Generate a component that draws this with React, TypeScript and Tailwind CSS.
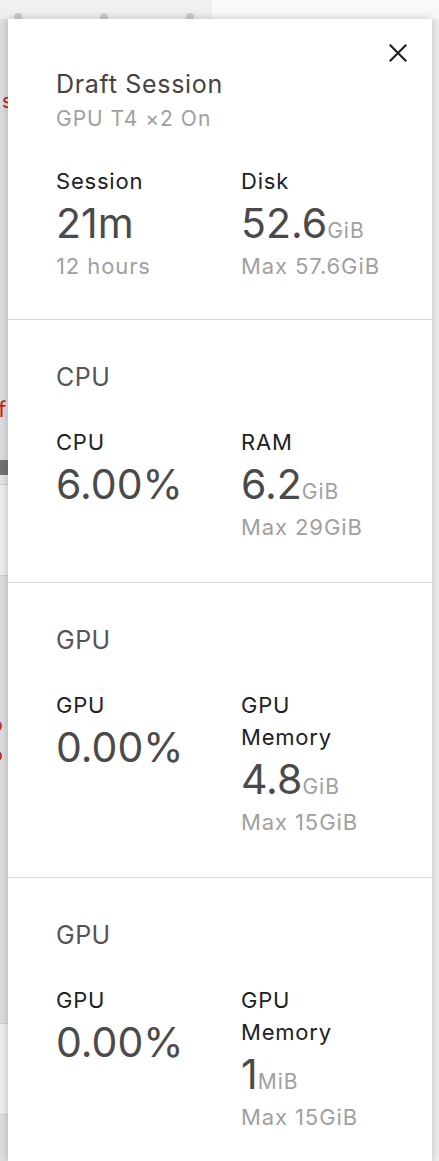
import React from "react";

type StatProps = { label: string; value: string; unit?: string; sub?: string };

function Stat({ label, value, unit, sub }: StatProps) {
  return (
    <div className="flex flex-col">
      <div className="text-[22px] leading-[32px] tracking-[0.8px] text-[#202124]">{label}</div>
      <div className="whitespace-nowrap text-[41px] leading-[53px] text-[#4a4a4a]">
        {value}
        {unit && <span className="text-[21px] leading-none tracking-[1px] text-[#a0a0a0]">{unit}</span>}
      </div>
      {sub && <div className="whitespace-nowrap text-[22px] leading-[32px] tracking-[0.9px] text-[#a0a0a0]">{sub}</div>}
    </div>
  );
}

function Section({ title, children, last }: { title: string; children: React.ReactNode; last?: boolean }) {
  return (
    <div className={last ? "px-[48px] pt-[41px] pb-[28px]" : "border-b border-[#dcdcdc] px-[48px] pt-[41px] pb-[39px]"}>
      <div className="text-[25px] leading-[32px] tracking-[0.5px] text-[#555555]">{title}</div>
      <div className="mt-[33px] grid grid-cols-[185px_1fr]">{children}</div>
    </div>
  );
}

export default function App() {
  return (
    <div className="relative h-[1161px] w-[439px] overflow-hidden bg-[#efefef] font-[Inter,sans-serif]">
      {/* page underneath */}
      <div className="flex h-[19px]">
        <div className="flex w-[212px] gap-[78px] bg-[#eef0f1] pl-[14px] pt-[13px]">
          <div className="h-[8px] w-[8px] rounded-full bg-[#cccdcf]" />
          <div className="h-[8px] w-[8px] rounded-full bg-[#cccdcf]" />
          <div className="h-[8px] w-[8px] rounded-full bg-[#cccdcf]" />
        </div>
        <div className="flex-1 bg-[#f9f9f9]" />
      </div>
      <div className="flex w-[8px] flex-col overflow-hidden">
        <div className="h-[441px] bg-[#dcdee0]">
          <div className="ml-[2px] mt-[70px] text-[20px] leading-[24px] text-[#c5221f]">s</div>
          <div className="-ml-[2px] mt-[284px] text-[22px] leading-[24px] text-[#c5221f]">f</div>
        </div>
        <div className="h-[15px] bg-[#6f7377]" />
        <div className="h-[9px] bg-[#e4e5e6]" />
        <div className="h-[92px] border-y border-[#cfd0d2] bg-[#eeeeef]" />
        <div className="h-[447px] bg-[#dcdee0]">
          <div className="-ml-[8px] mt-[134px] text-[18px] leading-[30px] text-[#b3261e]">o</div>
          <div className="-ml-[8px] text-[18px] leading-[30px] text-[#b3261e]">o</div>
        </div>
        <div className="h-[92px] border-y border-[#cfd0d2] bg-[#eeeeef]" />
        <div className="h-[60px] bg-[#dcdee0]" />
      </div>

      {/* session panel */}
      <div className="absolute left-[8px] top-[19px] w-[424px] bg-white shadow-[0_0_9px_rgba(0,0,0,0.22)]">
        <button className="absolute right-[24px] top-[24px] h-[20px] w-[20px]" aria-label="Close">
          <svg viewBox="0 0 20 20" className="h-[20px] w-[20px]">
            <path d="M1.8 1.8 L18.2 18.2 M18.2 1.8 L1.8 18.2" stroke="#202124" strokeWidth="2.2" fill="none" />
          </svg>
        </button>

        <div className="border-b border-[#dcdcdc] px-[48px] pt-[49px] pb-[37px]">
          <div className="text-[25px] leading-[32px] tracking-[0.7px] text-[#444444]">Draft Session</div>
          <div className="mt-[5px] text-[21px] leading-[28px] tracking-[1px] text-[#a0a0a0]">GPU T4 ×2 On</div>
          <div className="mt-[32px] grid grid-cols-[185px_1fr]">
            <Stat label="Session" value="21m" sub="12 hours" />
            <Stat label="Disk" value="52.6" unit="GiB" sub="Max 57.6GiB" />
          </div>
        </div>

        <Section title="CPU">
          <Stat label="CPU" value="6.00%" />
          <Stat label="RAM" value="6.2" unit="GiB" sub="Max 29GiB" />
        </Section>

        <Section title="GPU">
          <Stat label="GPU" value="0.00%" />
          <Stat label="GPU Memory" value="4.8" unit="GiB" sub="Max 15GiB" />
        </Section>

        <Section title="GPU" last>
          <Stat label="GPU" value="0.00%" />
          <Stat label="GPU Memory" value="1" unit="MiB" sub="Max 15GiB" />
        </Section>
      </div>
    </div>
  );
}
